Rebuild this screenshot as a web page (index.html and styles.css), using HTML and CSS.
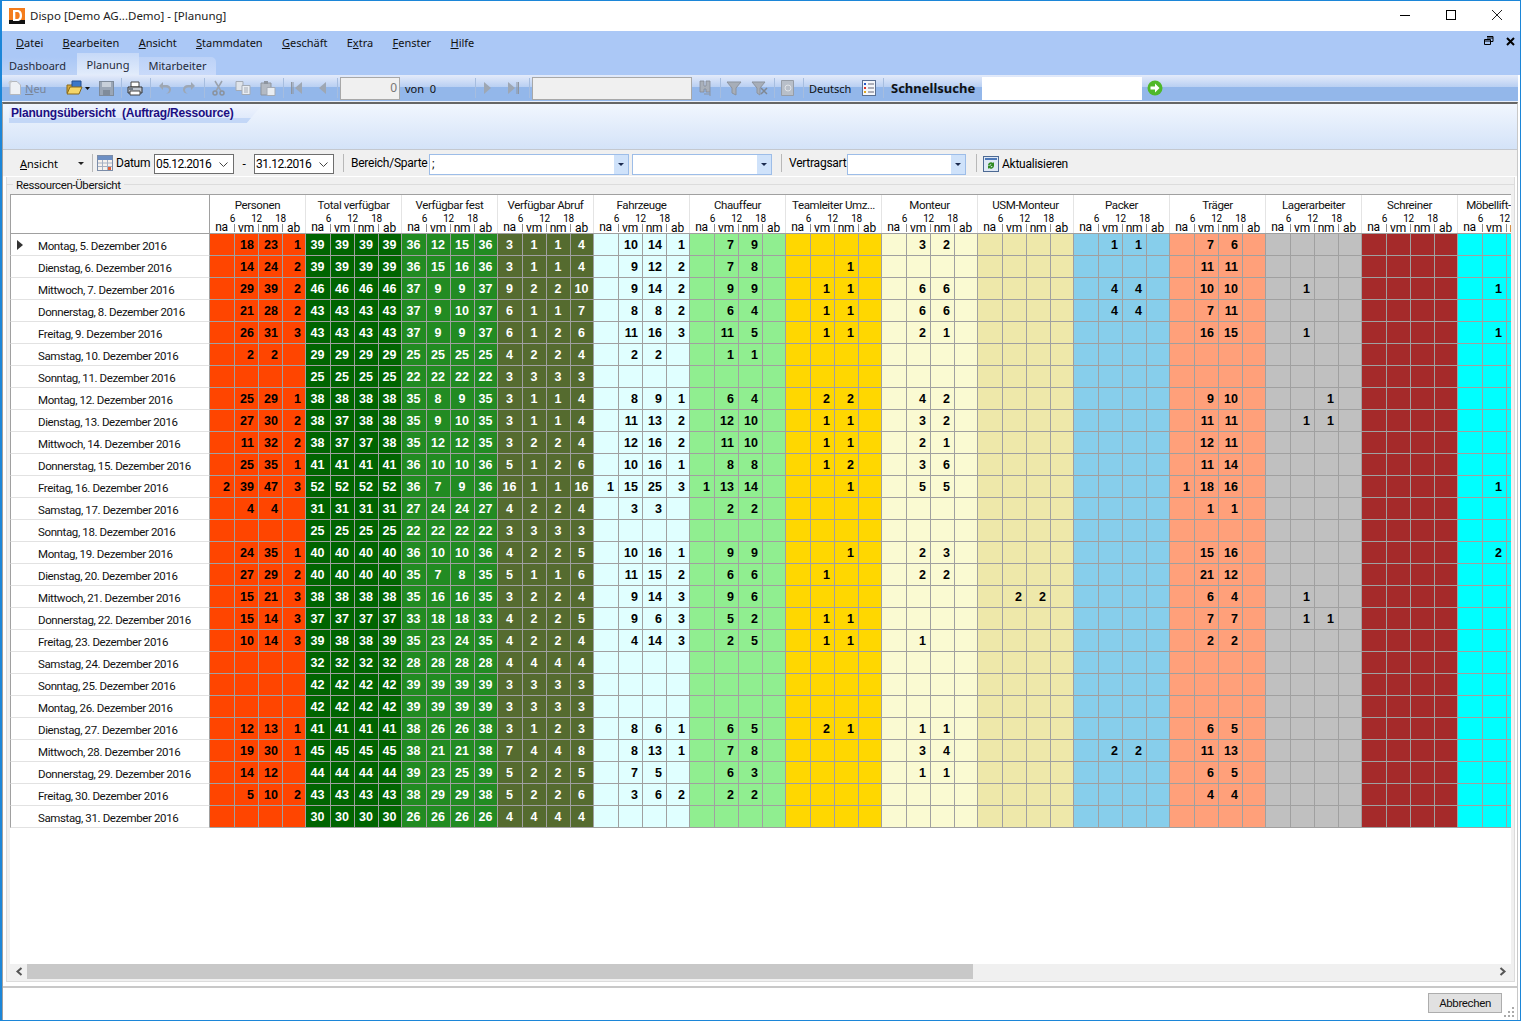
FILE: index.html
```html
<!DOCTYPE html>
<html lang="de">
<head>
<meta charset="utf-8">
<title>Dispo</title>
<link rel="stylesheet" href="styles.css">
</head>
<body>
<div class="window">
  <header class="titlebar">
    <svg class="logo" width="16" height="16" viewBox="0 0 16 16"><rect width="16" height="16" fill="#f47c1c"/><rect y="12" width="16" height="4" fill="#111"/><path d="M4 2h4.500c3 0 4.500 2.200 4.500 5.500S11.500 13 8.500 13H4z M6.300 4v7h2c1.600 0 2.400-1.300 2.400-3.500S9.900 4 8.300 4z" fill="#fff" fill-rule="evenodd"/></svg>
    <span class="title">Dispo [Demo AG...Demo] - [Planung]</span>
    <div class="winbtns">
      <svg width="12" height="12" viewBox="0 0 12 12"><path d="M1 6.500h10" stroke="#000"/></svg>
      <svg width="12" height="12" viewBox="0 0 12 12"><rect x="1.500" y="1.500" width="9" height="9" fill="none" stroke="#000"/></svg>
      <svg width="12" height="12" viewBox="0 0 12 12"><path d="M1 1l10 10M11 1L1 11" stroke="#222"/></svg>
    </div>
  </header>
  <nav class="menubar">
    <span><u>D</u>atei</span><span><u>B</u>earbeiten</span><span><u>A</u>nsicht</span><span><u>S</u>tammdaten</span><span><u>G</u>eschäft</span><span>E<u>x</u>tra</span><span><u>F</u>enster</span><span><u>H</u>ilfe</span>
    <div class="mdibtns">
      <svg width="10" height="10" viewBox="0 0 10 10"><path d="M3 .5h6v5H7M3 2h6M.5 3.500h6v5h-6zM.5 5h6" fill="none" stroke="#000"/></svg>
      <svg width="9" height="9" viewBox="0 0 9 9"><path d="M1 1l7 7M8 1L1 8" stroke="#000" stroke-width="2"/></svg>
    </div>
  </nav>
  <div class="tabs">
    <span class="tab first">Dashboard</span><span class="tab active">Planung</span><span class="tab last">Mitarbeiter</span>
  </div>
  <div class="toolbar">
    <svg class="ti i-neu" width="14" height="16" viewBox="0 0 14 16"><path d="M2 1.500h7l3.500 3.500v9.500H2z" fill="#eef1f5" stroke="#b5b8bd"/><path d="M1 1l2 2M3 0v3M0 3h3" stroke="#c8ccd0"/></svg>
    <span class="tlabel dim"><u>N</u>eu</span>
    <svg class="ti i-open" width="24" height="16" viewBox="0 0 24 16"><path d="M1 5h5l1-2h5v10H1z" fill="#d9a93a" stroke="#8a6a1a"/><path d="M6 1h9v7H6z" fill="#3b77c8" stroke="#254f90"/><path d="M1 14l3-7h12l-3 7z" fill="#f5d668" stroke="#8a6a1a"/><path d="M19 7h5l-2.500 3z" fill="#111"/></svg>
    <svg class="ti i-save" width="15" height="15" viewBox="0 0 15 15"><rect x=".5" y=".5" width="14" height="14" fill="#9aa6b6" stroke="#7f8b9a"/><rect x="3" y="1" width="9" height="5" fill="#c8d0da"/><rect x="4" y="9" width="7" height="5" fill="#7f8b9a"/></svg>
    <i class="tsep s1"></i>
    <svg class="ti i-print" width="16" height="15" viewBox="0 0 16 15"><path d="M4 1h8v5H4z" fill="#fff" stroke="#444"/><path d="M1 6h14v6H1z" fill="#bfc6d0" stroke="#333"/><path d="M3 10h10v4H3z" fill="#fff" stroke="#444"/><path d="M2 8h4" stroke="#234"/></svg>
    <i class="tsep s2"></i>
    <svg class="ti i-undo" width="14" height="14" viewBox="0 0 14 14"><path d="M5 1L1 5l4 4V6.500h3c2 0 3 1 3 2.500s-1 3-3 3.500c3 .5 5-1.500 5-4s-2-4.500-5-4.500H5z" fill="#9ea7b3"/></svg>
    <svg class="ti i-redo" width="14" height="14" viewBox="0 0 14 14"><path d="M9 1l4 4-4 4V6.500H6c-2 0-3 1-3 2.500s1 3 3 3.500c-3 .5-5-1.500-5-4s2-4.500 5-4.500h3z" fill="#9ea7b3"/></svg>
    <i class="tsep s3"></i>
    <svg class="ti i-cut" width="13" height="16" viewBox="0 0 13 16"><path d="M3 1l6 10M10 1L4 11" stroke="#9aa2ad" stroke-width="1.500"/><circle cx="3" cy="13" r="2" fill="none" stroke="#8a929d" stroke-width="1.500"/><circle cx="10" cy="13" r="2" fill="none" stroke="#8a929d" stroke-width="1.500"/></svg>
    <svg class="ti i-copy" width="16" height="14" viewBox="0 0 16 14"><path d="M1 .5h7v9H1z" fill="#dfe4ea" stroke="#a4abb5"/><path d="M7 4.500h8v9H7z" fill="#e9edf2" stroke="#a4abb5"/><path d="M9 7h4M9 9h4M9 11h4" stroke="#a4abb5"/></svg>
    <svg class="ti i-paste" width="16" height="15" viewBox="0 0 16 15"><path d="M1 2h10v12H1z" fill="#b4bac3" stroke="#8e959f"/><rect x="4" y="0" width="4" height="3" fill="#8e959f"/><path d="M7 6.500h8v8H7z" fill="#e9edf2" stroke="#a4abb5"/></svg>
    <i class="tsep s4"></i>
    <svg class="ti i-first" width="11" height="12" viewBox="0 0 11 12"><path d="M.5 0v12M2 0v12" stroke="#8e959f"/><path d="M11 0v12L4 6z" fill="#9ea7b3"/></svg>
    <svg class="ti i-prev" width="8" height="12" viewBox="0 0 8 12"><path d="M8 0v12L1 6z" fill="#9ea7b3"/></svg>
    <i class="tsep s5"></i>
    <div class="tinput num">0</div>
    <span class="tlabel von">von&nbsp; 0</span>
    <i class="tsep s6"></i>
    <svg class="ti i-next" width="8" height="12" viewBox="0 0 8 12"><path d="M0 0v12l7-6z" fill="#9ea7b3"/></svg>
    <svg class="ti i-last" width="11" height="12" viewBox="0 0 11 12"><path d="M0 0v12l7-6z" fill="#9ea7b3"/><path d="M9 0v12M10.500 0v12" stroke="#8e959f"/></svg>
    <i class="tsep s7"></i>
    <div class="tinput wide"></div>
    <svg class="ti i-bino" width="15" height="16" viewBox="0 0 15 16"><path d="M2 1h4v5h2V1h4v11H8V9H6v3H2z" fill="#a9b0ba" stroke="#858c96" stroke-width=".8"/><path d="M6 14h6M12 12v4" stroke="#8e959f"/></svg>
    <i class="tsep s8"></i>
    <svg class="ti i-fil" width="16" height="16" viewBox="0 0 16 16"><path d="M1 2h14L10 8v7l-4-2V8z" fill="#a7aeb8" stroke="#8c939d"/></svg>
    <svg class="ti i-filx" width="17" height="16" viewBox="0 0 17 16"><path d="M1 2h13L9 8v7l-3-2V8z" fill="#a7aeb8" stroke="#8c939d"/><path d="M10 8l6 6M16 8l-6 6" stroke="#7f8791" stroke-width="1.500"/></svg>
    <i class="tsep s9"></i>
    <svg class="ti i-doc" width="15" height="16" viewBox="0 0 15 16"><path d="M1.500.5h12v15h-12z" fill="#b8bfc9" stroke="#969da7"/><circle cx="8" cy="8" r="3" fill="none" stroke="#dfe3e8"/></svg>
    <i class="tsep s10"></i>
    <span class="tlabel lang">Deutsch</span>
    <svg class="ti i-list" width="14" height="16" viewBox="0 0 14 16"><rect x=".5" y=".5" width="13" height="15" fill="#f4f6fa" stroke="#5a6f92"/><path d="M2 3h2v2H2z" fill="#2456c8"/><path d="M2 7h2v2H2z" fill="#d8342a"/><path d="M2 11h2v2H2z" fill="#e0a820"/><path d="M6 4h6M6 8h6M6 12h6" stroke="#667"/></svg>
    <i class="tsep s11"></i>
    <b class="quick">Schnellsuche</b>
    <div class="qinput"></div>
    <svg class="ti i-go" width="16" height="16" viewBox="0 0 16 16"><circle cx="8" cy="8" r="7.500" fill="#4fb82a"/><path d="M3.500 6.500H8V3.500L12.500 8 8 12.500v-3H3.500z" fill="#fff"/></svg>
  </div>
  <div class="content">
    <div class="banner">
      <div class="bannertitle">Planungsübersicht  (Auftrag/Ressource)</div>
    </div>
    <div class="filters">
      <span class="f-ansicht"><u>A</u>nsicht</span>
      <i class="caret"></i>
      <i class="fsep"></i>
      <svg class="f-cal" width="16" height="16" viewBox="0 0 16 16"><rect x=".5" y=".5" width="15" height="15" fill="#f6f2ee" stroke="#7b8ca8"/><rect x="1" y="1" width="14" height="4" fill="#6d8fc4"/><path d="M1 8h14M1 11.500h14M5.500 5v10M10.500 5v10" stroke="#a4b0c4"/><rect x="11" y="12" width="3" height="3" fill="#e0603a"/></svg>
      <span class="f-datum">Datum</span>
      <div class="dateinput from">05.12.2016<svg width="9" height="5" viewBox="0 0 9 5"><path d="M.5.500l4 4 4-4" fill="none" stroke="#444"/></svg></div>
      <span class="f-dash">-</span>
      <div class="dateinput to">31.12.2016<svg width="9" height="5" viewBox="0 0 9 5"><path d="M.5.500l4 4 4-4" fill="none" stroke="#444"/></svg></div>
      <i class="fsep s-b"></i>
      <span class="f-bereich">Bereich/Sparte</span>
      <div class="combo c1">;<i class="dd"></i></div>
      <div class="combo c2"><i class="dd"></i></div>
      <i class="fsep s-v"></i>
      <span class="f-vertrag">Vertragsart</span>
      <div class="combo c3"><i class="dd"></i></div>
      <i class="fsep s-a"></i>
      <svg class="f-ref" width="16" height="16" viewBox="0 0 16 16"><rect x=".5" y=".5" width="15" height="15" fill="#dfe8f5" stroke="#4d6a94"/><rect x="2" y="2" width="12" height="2" fill="#4d78b8"/><path d="M5 9a3 3 0 0 1 5-2l1-1v4H7l1.500-1.500A1.500 1.500 0 0 0 6.500 9zM11 10a3 3 0 0 1-5 2l-1 1V9.500h4L7.500 11a1.500 1.500 0 0 0 2-1z" fill="#2f8a22"/></svg>
      <span class="f-akt">Aktualisieren</span>
    </div>
    <section class="groupbox">
      <div class="legend">Ressourcen-Übersicht</div>
      <div class="gridwrap">
        <div class="grid" id="grid"></div>
      </div>
      <div class="hscroll">
        <div class="arrow"><svg width="8" height="9" viewBox="0 0 8 9"><path d="M6.500 1L2.500 4.500l4 3.500" fill="none" stroke="#555" stroke-width="2"/></svg></div>
        <div class="thumb"></div>
        <div class="arrow right"><svg width="8" height="9" viewBox="0 0 8 9"><path d="M1.500 1l4 3.500-4 3.500" fill="none" stroke="#555" stroke-width="2"/></svg></div>
      </div>
    </section>
    <footer class="bottombar">
      <div class="btn">Abbrechen</div>
      <svg class="grip" width="11" height="11" viewBox="0 0 11 11"><path d="M8 0h2v2H8zM4 4h2v2H4zM8 4h2v2H8zM0 8h2v2H0zM4 8h2v2H4zM8 8h2v2H8z" fill="#aaa"/></svg>
    </footer>
  </div>
</div>
<script src="app.js"></script>
</body>
</html>
```
FILE: styles.css
```css
* { box-sizing: border-box; }
html, body { margin: 0; padding: 0; }
body { width: 1521px; height: 1022px; overflow: hidden; background: #fff; font-family: Roboto, "Liberation Sans", Arial, sans-serif; font-size: 12px; letter-spacing: -.25px; color: #000; }
.window { width: 1521px; height: 1021px; border: 1px solid #1c86d8; border-left-width: 2px; display: flex; flex-direction: column; background: #fff; }

.titlebar { height: 30px; flex: none; display: flex; align-items: center; padding: 0 0 1px 7px; background: #fff; }
.logo { flex: none; }
.title { margin-left: 5px; font-family: "Noto Sans", sans-serif; font-size: 11.5px; letter-spacing: 0; color: #222; }
.winbtns { margin-left: auto; display: flex; gap: 34px; padding-right: 17px; margin-top: -2px; }

.menubar { height: 22px; flex: none; background: #abc8f6; display: flex; align-items: center; gap: 19.3px; padding-left: 14px; font-family: "Noto Sans", sans-serif; font-size: 11px; letter-spacing: 0; color: #111; }
.mdibtns { margin-left: auto; display: flex; align-items: center; gap: 12px; padding-right: 5px; margin-top: -2px; }

.tabs { height: 22px; flex: none; background: #abc8f6; display: flex; align-items: flex-end; font-family: "Noto Sans", sans-serif; font-size: 11px; letter-spacing: 0; color: #1f2a3a; }
.tab { height: 18px; display: flex; align-items: center; justify-content: center; padding-bottom: 2px; }
.tab.first { width: 75px; background: linear-gradient(#abc8f6, #bcd2f6); padding-right: 4px; }
.tab.active { width: 62px; height: 22px; background: linear-gradient(#c6d9f8, #e2ecfb); padding-top: 3px; }
.tab.last { width: 77px; background: linear-gradient(#bcd2f7, #c9dafa); border-radius: 0 5px 0 0; }

.toolbar { height: 27px; flex: none; display: flex; align-items: center; background: linear-gradient(#e4ebfa 0, #b7cef2 48%, #93b7ea 48%, #93b7ea 100%); border-bottom: 1px solid #eaf0fb; padding-left: 6px; margin-right: 2px; }
.ti { flex: none; }
.tsep { flex: none; width: 1px; height: 20px; background: #a6bddf; }
.tlabel { flex: none; font-family: "Noto Sans", sans-serif; font-size: 11px; letter-spacing: 0; color: #111; white-space: nowrap; }
.tlabel.dim { color: #7a8597; margin-left: 3px; width: 22px; }
.i-open { margin-left: 19px; }
.i-save { margin-left: 9px; }
.s1 { margin-left: 7px; }
.i-print { margin-left: 5px; }
.s2 { margin-left: 7px; }
.i-undo { margin-left: 7px; }
.i-redo { margin-left: 10px; }
.s3 { margin-left: 8px; }
.i-cut { margin-left: 7px; }
.i-copy { margin-left: 10px; }
.i-paste { margin-left: 9px; }
.s4 { margin-left: 7px; }
.i-first { margin-left: 7px; }
.i-prev { margin-left: 16px; }
.s5 { margin-left: 11px; }
.tinput { flex: none; height: 23px; background: #f0f0f0; border: 1px solid #a8a8a8; }
.tinput.num { width: 60px; margin-left: 2px; text-align: right; padding-right: 2px; line-height: 20px; font-family: "Noto Sans", sans-serif; letter-spacing: 0; color: #777; }
.von { margin-left: 5px; width: 36px; }
.s6 { margin-left: 34px; }
.i-next { margin-left: 8px; }
.i-last { margin-left: 16px; }
.s7 { margin-left: 10px; }
.tinput.wide { width: 160px; margin-left: 2px; }
.i-bino { margin-left: 6px; }
.s8 { margin-left: 7px; }
.i-fil { margin-left: 5px; }
.i-filx { margin-left: 9px; }
.s9 { margin-left: 6px; }
.i-doc { margin-left: 5px; }
.s10 { margin-left: 8px; }
.lang { margin-left: 5px; width: 43px; }
.i-list { margin-left: 10px; }
.s11 { margin-left: 7px; }
.quick { flex: none; margin-left: 7px; width: 91px; font-family: "Noto Sans", sans-serif; font-size: 13px; letter-spacing: 0; color: #111; line-height: 1; white-space: nowrap; }
.qinput { flex: none; width: 160px; height: 23px; background: #fff; }
.i-go { margin-left: 5px; }

.content { flex: 1; display: flex; flex-direction: column; min-height: 0; border-left: 1px solid #a0a0a0; border-top: 2px solid #666; border-right: 1px solid #c8c8c8; margin-right: 2px; }
.banner { height: 46px; flex: none; background: linear-gradient(#f1f6fe, #d4e3f8); border-bottom: 1px solid #c4c8cf; padding: 1px 0 0 6px; }
.bannertitle { width: 253px; height: 18px; padding: 1px 0 0 2px; font-family: "Liberation Sans", sans-serif; font-weight: bold; font-size: 12px; letter-spacing: -.2px; line-height: 15px; color: #1c0f82; white-space: pre; background: linear-gradient(#eff4fe 0, #e0eafb 70%, #c3d7f7 70%, #c3d7f7 100%); clip-path: polygon(0 0, 100% 0, 94% 100%, 0 100%); }

.filters { height: 27px; flex: none; background: #f0f0f0; border-bottom: 1px solid #fff; display: flex; align-items: center; padding: 2px 0 0 17px; }
.f-ansicht { font-family: "Noto Sans", sans-serif; font-size: 11px; letter-spacing: 0; width: 58px; margin-top: -2px; }
.caret { flex: none; width: 0; height: 0; border: 3px solid transparent; border-top: 3px solid #222; border-bottom: 0; margin-top: -2px; }
.fsep { flex: none; width: 1px; height: 18px; background: #b8b8b8; margin-left: 8px; margin-top: -2px; }
.f-cal { flex: none; margin-left: 4px; margin-top: -2px; }
.f-datum { margin-left: 3px; width: 38px; margin-top: -2px; }
.dateinput { flex: none; width: 80px; height: 20px; border: 1px solid #6e6e6e; background: #fff; display: flex; align-items: center; justify-content: space-between; padding: 0 5px 0 1px; letter-spacing: -.5px; }
.f-dash { width: 20px; text-align: center; }
.s-b { margin-left: 9px; }
.f-bereich { margin-left: 7px; width: 78px; margin-top: -2px; white-space: nowrap; }
.combo { flex: none; height: 21px; background: #fff; border: 1px solid #9dbde8; display: flex; align-items: center; justify-content: space-between; padding-left: 2px; }
.c1 { width: 200px; }
.c2 { width: 140px; margin-left: 3px; }
.c3 { width: 119px; }
.dd { flex: none; width: 14px; height: 19px; margin-left: auto; background: #cfe2fa; position: relative; }
.dd::after { content: ""; position: absolute; left: 4px; top: 8px; border: 3px solid transparent; border-top: 3px solid #1b2a4e; border-bottom: 0; }
.s-v { margin-left: 9px; }
.f-vertrag { margin-left: 7px; width: 58px; margin-top: -2px; white-space: nowrap; }
.s-a { margin-left: 10px; }
.f-ref { flex: none; margin-left: 6px; margin-top: -1px; }
.f-akt { margin-left: 3px; }

.groupbox { margin: 0 2px 0 3px; padding: 17px 0 0 0; position: relative; background: #f0f0f0; border: 1px solid #dcdcdc; border-top: 0; display: flex; flex-direction: column; height: 805px; flex: none; }
.groupbox::before { content: ""; position: absolute; left: 0; right: 0; top: 7px; border-top: 1px solid #dcdcdc; }
.legend { position: absolute; left: 6px; top: 1px; padding: 0 3px; height: 15px; line-height: 15px; background: #f0f0f0; color: #111; font-size: 11.5px; letter-spacing: -.375px; }
.gridwrap { width: 1501px; height: 770px; flex: none; margin-left: 3px; overflow: hidden; background: #fff; border-top: 1px solid #a0a0a0; }
.grid { width: max-content; }
.row, .hrow { display: flex; }
.hrow { height: 39px; border-bottom: 1px solid #a0a0a0; background: #fff; }
.corner { flex: none; width: 200px; border-right: 1px solid #a0a0a0; border-left: 1px solid #a0a0a0; }
.ghead { flex: none; width: 96px; border-right: 1px solid #e4e4e4; display: flex; flex-direction: column; }
.gname { height: 17px; padding-top: 3px; line-height: 14px; text-align: center; white-space: nowrap; overflow: hidden; color: #111; font-size: 11.5px; letter-spacing: -.375px; }
.hours, .subs { display: grid; grid-template-columns: 25px 24px 24px 23px; }
.hours { height: 10px; margin-top: 2px; font-size: 10px; line-height: 10px; }
.hours span { text-align: right; margin-right: -3px; }
.hours span:first-child { margin-right: 0; }
.subs { height: 11px; line-height: 11px; text-align: center; margin-top: -2px; }
.subs span { padding-right: 2px; }
.subs span + span { border-left: 1px solid #8a8a8a; height: 8px; margin-top: 2px; margin-left: -1px; line-height: 8px; }
.row { height: 22px; }
.label { flex: none; width: 200px; height: 22px; border-left: 1px solid #a0a0a0; border-right: 1px solid #a0a0a0; border-bottom: 1px solid #e2e2e2; padding-left: 27px; line-height: 24px; color: #111; white-space: nowrap; position: relative; font-size: 11.5px; letter-spacing: -.375px; }
.label.cur::before { content: ""; position: absolute; left: 6px; top: 6px; border: 5px solid transparent; border-left: 6px solid #333; border-right: 0; }
.grp { flex: none; width: 96px; height: 22px; display: grid; grid-template-columns: 25px 24px 24px 23px; }
.c { height: 22px; border-right: 1px solid #a0a0a0; border-bottom: 1px solid #a0a0a0; font-family: "Liberation Sans", sans-serif; font-weight: bold; font-size: 12.5px; letter-spacing: 0; padding-top: 1px; line-height: 20px; text-align: right; padding-right: 4px; color: #000; }
.ctr .c { text-align: center; padding-right: 1px; color: #fff; }
.g0 { background: #ff4500; }
.g1 { background: #006400; }
.g2 { background: #228b22; }
.g3 { background: #556b2f; }
.g4 { background: #e0ffff; }
.g5 { background: #90ee90; }
.g6 { background: #ffd700; }
.g7 { background: #fafad2; }
.g8 { background: #eee8aa; }
.g9 { background: #87ceeb; }
.g10 { background: #ffa07a; }
.g11 { background: #c0c0c0; }
.g12 { background: #a52a2a; }
.g13 { background: #00ffff; }

.hscroll { height: 15px; width: 1501px; flex: none; margin-left: 3px; display: flex; background: #f0f0f0; }
.arrow { flex: none; width: 17px; display: flex; align-items: center; justify-content: center; }
.arrow.right { margin-left: auto; }
.thumb { flex: none; width: 946px; background: #c8c8c8; }

.bottombar { flex: 1; margin-top: 4px; border-top: 2px solid #c8c8c8; background: #fff; display: flex; align-items: flex-start; justify-content: flex-end; padding: 5px 15px 0 0; position: relative; }
.btn { width: 74px; height: 20px; border: 1px solid #adadad; background: #e1e1e1; text-align: center; line-height: 18px; color: #111; font-size: 11.5px; letter-spacing: -.375px; }
.grip { position: absolute; right: 2px; bottom: 2px; }
```
FILE: app.js
```js
var groups = ["Personen","Total verfügbar","Verfügbar fest","Verfügbar Abruf","Fahrzeuge","Chauffeur","Teamleiter Umz...","Monteur","USM-Monteur","Packer","Träger","Lagerarbeiter","Schreiner","Möbellift-Instal..."];
var days = ["Montag","Dienstag","Mittwoch","Donnerstag","Freitag","Samstag","Sonntag"];
// each row: groups separated by |, values by comma, "n*" fills all four cells
var data = [
",18,23,1|39*|36,12,15,36|3,1,1,4|,10,14,1|,7,9,||,3,2,||,1,1,|,7,6,|||",
",14,24,2|39*|36,15,16,36|3,1,1,4|,9,12,2|,7,8,|,,1,||||,11,11,|||",
",29,39,2|46*|37,9,9,37|9,2,2,10|,9,14,2|,9,9,|,1,1,|,6,6,||,4,4,|,10,10,|,1,,||,1,,",
",21,28,2|43*|37,9,10,37|6,1,1,7|,8,8,2|,6,4,|,1,1,|,6,6,||,4,4,|,7,11,|||",
",26,31,3|43*|37,9,9,37|6,1,2,6|,11,16,3|,11,5,|,1,1,|,2,1,|||,16,15,|,1,,||,1,,",
",2,2,|29*|25*|4,2,2,4|,2,2,|,1,1,||||||||",
"|25*|22*|3*||||||||||",
",25,29,1|38*|35,8,9,35|3,1,1,4|,8,9,1|,6,4,|,2,2,|,4,2,|||,9,10,|,,1,||",
",27,30,2|38,37,38,38|35,9,10,35|3,1,1,4|,11,13,2|,12,10,|,1,1,|,3,2,|||,11,11,|,1,1,||",
",11,32,2|38,37,37,38|35,12,12,35|3,2,2,4|,12,16,2|,11,10,|,1,1,|,2,1,|||,12,11,|||",
",25,35,1|41*|36,10,10,36|5,1,2,6|,10,16,1|,8,8,|,1,2,|,3,6,|||,11,14,|||",
"2,39,47,3|52*|36,7,9,36|16,1,1,16|1,15,25,3|1,13,14,|,,1,|,5,5,|||1,18,16,|||,1,,",
",4,4,|31*|27,24,24,27|4,2,2,4|,3,3,|,2,2,|||||,1,1,|||",
"|25*|22*|3*||||||||||",
",24,35,1|40*|36,10,10,36|4,2,2,5|,10,16,1|,9,9,|,,1,|,2,3,|||,15,16,|||,2,,",
",27,29,2|40*|35,7,8,35|5,1,1,6|,11,15,2|,6,6,|,1,,|,2,2,|||,21,12,|||",
",15,21,3|38*|35,16,16,35|3,2,2,4|,9,14,3|,9,6,|||,2,2,||,6,4,|,1,,||",
",15,14,3|37*|33,18,18,33|4,2,2,5|,9,6,3|,5,2,|,1,1,||||,7,7,|,1,1,||",
",10,14,3|39,38,38,39|35,23,24,35|4,2,2,4|,4,14,3|,2,5,|,1,1,|,1,,|||,2,2,|||",
"|32*|28*|4*||||||||||",
"|42*|39*|3*||||||||||",
"|42*|39*|3*||||||||||",
",12,13,1|41*|38,26,26,38|3,1,2,3|,8,6,1|,6,5,|,2,1,|,1,1,|||,6,5,|||",
",19,30,1|45*|38,21,21,38|7,4,4,8|,8,13,1|,7,8,||,3,4,||,2,2,|,11,13,|||",
",14,12,|44*|39,23,25,39|5,2,2,5|,7,5,|,6,3,||,1,1,|||,6,5,|||",
",5,10,2|43*|38,29,29,38|5,2,2,6|,3,6,2|,2,2,|||||,4,4,|||",
"|30*|26*|4*||||||||||"
];
var grid = document.getElementById("grid");
var html = '<div class="hrow"><div class="corner"></div>';
groups.forEach(function (g) {
  html += '<div class="ghead"><div class="gname">' + g + '</div><div class="hours"><span>6</span><span>12</span><span>18</span><span></span></div><div class="subs"><span>na</span><span>vm</span><span>nm</span><span>ab</span></div></div>';
});
html += '</div>';
data.forEach(function (line, r) {
  var label = days[r % 7] + ", " + (r + 5) + ". Dezember 2016";
  html += '<div class="row"><div class="label' + (r === 0 ? ' cur' : '') + '">' + label + '</div>';
  var parts = line.split("|");
  for (var g = 0; g < 14; g++) {
    var p = parts[g] || "";
    var vals;
    if (p.slice(-1) === "*") { var v = p.slice(0, -1); vals = [v, v, v, v]; }
    else { vals = p.split(","); }
    html += '<div class="grp g' + g + (g >= 1 && g <= 3 ? ' ctr' : '') + '">';
    for (var i = 0; i < 4; i++) { html += '<div class="c">' + (vals[i] || "") + '</div>'; }
    html += '</div>';
  }
  html += '</div>';
});
grid.innerHTML = html;
```
